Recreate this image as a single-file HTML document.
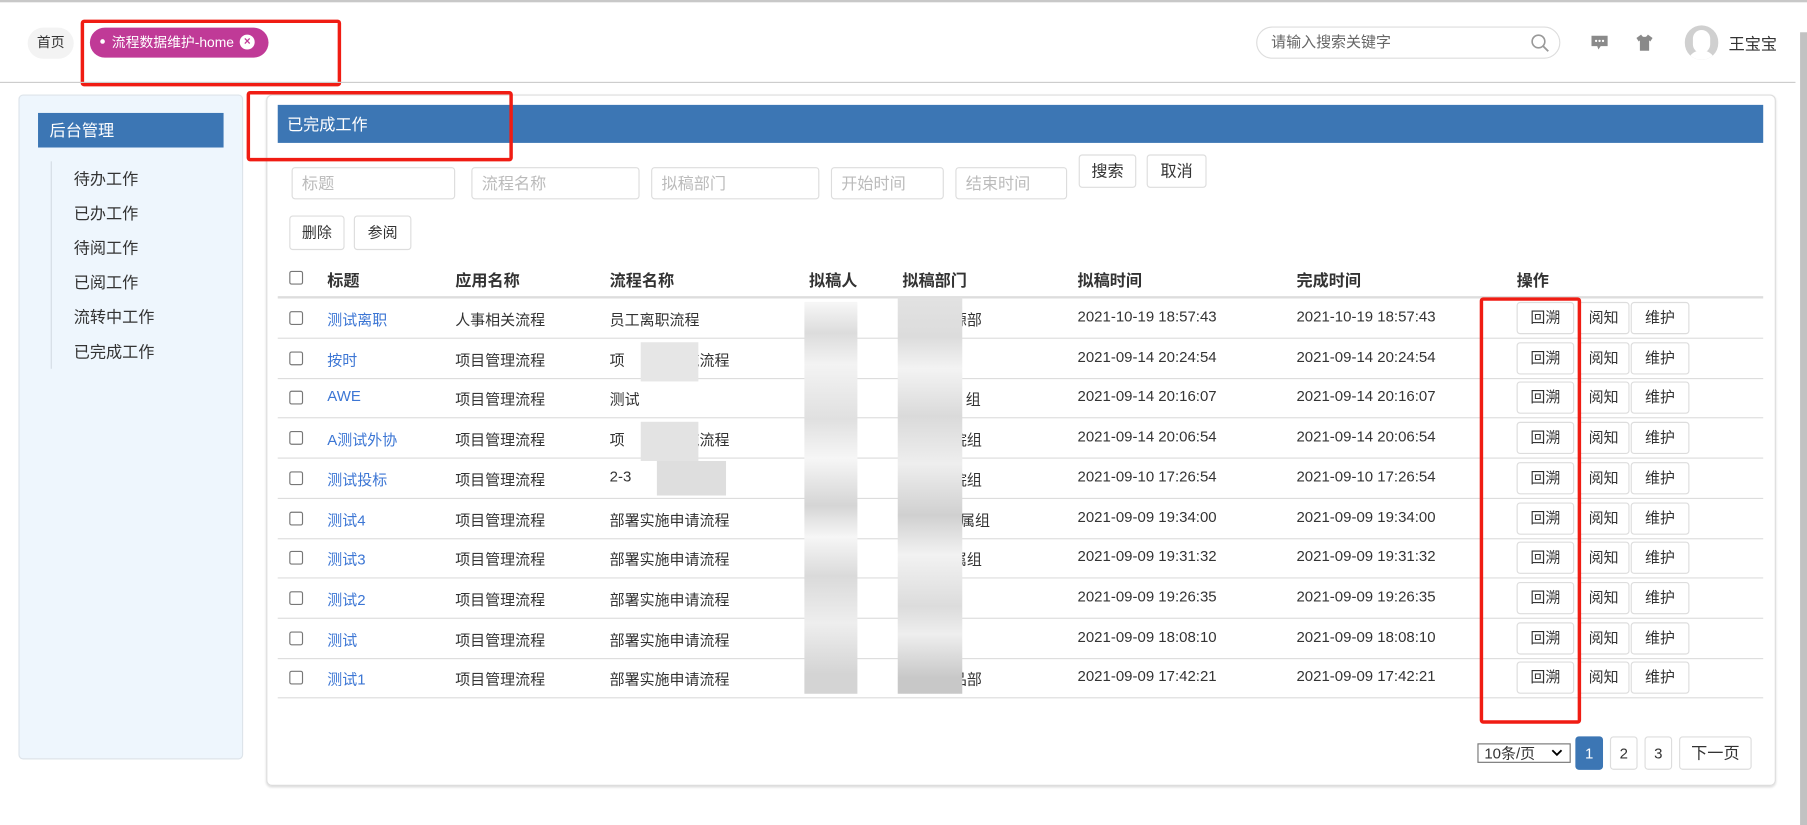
<!DOCTYPE html>
<html><head><meta charset="utf-8">
<style>
html,body{margin:0;padding:0;background:#fff;overflow:hidden;width:1807px;height:825px}
#w{position:absolute;left:0;top:0;width:1568px;height:716px;transform:scale(1.15242);transform-origin:0 0;font-family:"Liberation Sans","Noto Sans CJK SC",sans-serif;font-size:14px;color:#333}
.a{position:absolute}
.inp{position:absolute;top:145px;height:28px;border:1px solid #ddd;border-radius:3px;box-sizing:border-box;color:#bbb;font-size:14px;line-height:26px;padding-left:8px}
.btn{position:absolute;border:1px solid #ddd;border-radius:3px;box-sizing:border-box;background:#fff;text-align:center;font-size:13px;color:#333}
.cb{position:absolute;left:251px;width:10px;height:10px;border:1px solid #777;border-radius:2px}
.row{position:absolute;left:241px;width:1289px;height:34px;border-bottom:1px solid #ddd}
.row span{position:absolute;top:8px;font-size:13px}
.red{position:absolute;border:3px solid #f01c13;border-radius:3px;box-sizing:border-box}
.blk{position:absolute;background:#d8d8da}
</style></head><body><div id="w">
<div class="a" style="left:0;top:0;width:1568px;height:2px;background:#c8c8c8"></div>
<div class="a" style="left:24px;top:24px;width:40px;height:27px;border-radius:14px;background:#f3f3f3;font-size:12px;line-height:27px;text-align:center">首页</div>
<div class="a" style="left:78px;top:24px;width:155px;height:26px;border-radius:13px;background:#c03a97;color:#fff;font-size:12px;line-height:26px"><span style="position:absolute;left:9px;top:10px;width:4px;height:4px;border-radius:2px;background:#fff"></span><span style="position:absolute;left:19px">流程数据维护-home</span><span style="position:absolute;left:130px;top:6px;width:13px;height:13px;border-radius:7px;background:#fff;color:#c03a97;font-size:10px;line-height:13px;text-align:center;font-weight:bold">×</span></div>
<div class="red" style="left:70px;top:17px;width:226px;height:58px"></div>
<div class="a" style="left:0;top:71px;width:1558px;height:1px;background:#ccc"></div>
<div class="a" style="left:1090px;top:23px;width:264px;height:28px;border:1px solid #ddd;border-radius:15px;box-sizing:border-box;color:#666;font-size:13px;line-height:26px;padding-left:12px">请输入搜索关键字
<svg style="position:absolute;right:8px;top:5px" width="17" height="17" viewBox="0 0 17 17"><circle cx="7" cy="7" r="5.5" fill="none" stroke="#999" stroke-width="1.4"/><path d="M11 11l4.5 4.5" stroke="#999" stroke-width="1.6"/></svg></div>
<svg class="a" style="left:1380px;top:30px" width="16" height="15" viewBox="0 0 16 15"><path d="M1 1h14v9H9l-2 3-1-3H1z" fill="#8a8a8a"/><circle cx="5" cy="5.5" r="1" fill="#fff"/><circle cx="8" cy="5.5" r="1" fill="#fff"/><circle cx="11" cy="5.5" r="1" fill="#fff"/></svg>
<svg class="a" style="left:1419px;top:29px" width="16" height="16" viewBox="0 0 16 16"><path d="M5 1L1 4l2 3 1-1v9h8V6l1 1 2-3-4-3c-1 1-1 2-3 2S6 2 5 1z" fill="#8a8a8a"/></svg>
<div class="a" style="left:1462px;top:22px;width:29px;height:30px;border-radius:15px;background:#d0d0d0;overflow:hidden"><div class="a" style="left:7px;top:4px;width:15px;height:20px;border-radius:8px;background:#fff"></div><div class="a" style="left:3px;top:22px;width:23px;height:12px;border-radius:10px 10px 0 0;background:#fff"></div></div>
<div class="a" style="left:1500px;top:28px;font-size:14px;color:#333">王宝宝</div>
<div class="a" style="left:1562px;top:28px;width:6px;height:688px;background:#c2c2c2"></div>

<div class="a" style="left:16px;top:82px;width:195px;height:577px;background:#eef6fd;border:1px solid #dde4ea;border-radius:4px;box-sizing:border-box"></div>
<div class="a" style="left:33px;top:98px;width:161px;height:30px;background:#3c76b4;color:#fff;font-size:14px;line-height:30px;padding-left:10px;box-sizing:border-box">后台管理</div>
<div class="a" style="left:44px;top:140px;width:1px;height:180px;background:#d5dde5"></div>
<div class="a" style="left:64px;top:140px;line-height:30px;font-size:14px">待办工作<br>已办工作<br>待阅工作<br>已阅工作<br>流转中工作<br>已完成工作</div>

<div class="a" style="left:231px;top:82px;width:1310px;height:600px;border:1px solid #ddd;border-radius:5px;box-sizing:border-box;box-shadow:0 1px 2px #ddd"></div>
<div class="a" style="left:241px;top:91px;width:1289px;height:33px;background:#3c76b4;color:#fff;font-size:14px;line-height:35px;padding-left:8px;box-sizing:border-box">已完成工作</div>
<div class="red" style="left:214px;top:79px;width:231px;height:61px"></div>

<div class="inp" style="left:253px;width:142px">标题</div>
<div class="inp" style="left:409px;width:146px">流程名称</div>
<div class="inp" style="left:565px;width:146px">拟稿部门</div>
<div class="inp" style="left:721px;width:98px">开始时间</div>
<div class="inp" style="left:829px;width:97px">结束时间</div>
<div class="btn" style="left:936px;top:134px;width:50px;height:29px;line-height:27px;font-size:14px">搜索</div>
<div class="btn" style="left:995px;top:134px;width:52px;height:29px;line-height:27px;font-size:14px">取消</div>
<div class="btn" style="left:251px;top:187px;width:48px;height:30px;line-height:28px">删除</div>
<div class="btn" style="left:307px;top:187px;width:50px;height:30px;line-height:28px">参阅</div>

<div class="a" style="left:241px;top:226px;width:1289px;height:31px;border-bottom:2px solid #ddd;font-weight:bold;font-size:14px">
<div class="cb" style="left:10px;top:9px"></div>
<span class="a" style="left:43px;top:7px">标题</span><span class="a" style="left:154px;top:7px">应用名称</span><span class="a" style="left:288px;top:7px">流程名称</span><span class="a" style="left:461px;top:7px">拟稿人</span><span class="a" style="left:542px;top:7px">拟稿部门</span><span class="a" style="left:694px;top:7px">拟稿时间</span><span class="a" style="left:884px;top:7px">完成时间</span><span class="a" style="left:1075px;top:7px">操作</span>
</div>

<div id="rows"></div>
<script>
var d=[["测试离职","人事相关流程","员工离职流程","源部","2021-10-19 18:57:43","2021-10-19 18:57:43"],
["按时","项目管理流程","项　　　　施流程","","2021-09-14 20:24:54","2021-09-14 20:24:54"],
["AWE","项目管理流程","测试","组","2021-09-14 20:16:07","2021-09-14 20:16:07"],
["A测试外协","项目管理流程","项　　　　施流程","院组","2021-09-14 20:06:54","2021-09-14 20:06:54"],
["测试投标","项目管理流程","2-3","院组","2021-09-10 17:26:54","2021-09-10 17:26:54"],
["测试4","项目管理流程","部署实施申请流程","直属组","2021-09-09 19:34:00","2021-09-09 19:34:00"],
["测试3","项目管理流程","部署实施申请流程","属组","2021-09-09 19:31:32","2021-09-09 19:31:32"],
["测试2","项目管理流程","部署实施申请流程","","2021-09-09 19:26:35","2021-09-09 19:26:35"],
["测试","项目管理流程","部署实施申请流程","","2021-09-09 18:08:10","2021-09-09 18:08:10"],
["测试1","项目管理流程","部署实施申请流程","品部","2021-09-09 17:42:21","2021-09-09 17:42:21"]];
var h="";
for(var i=0;i<10;i++){var r=d[i],t=259+i*34.7;
h+='<div class="row" style="top:'+t+'px"><div class="cb" style="left:10px;top:11px"></div>'+
'<span style="left:43px;color:#3c76d4">'+r[0]+'</span><span style="left:154px">'+r[1]+'</span><span style="left:288px">'+r[2]+'</span>'+
'<span style="left:'+(r[3].length>=3?579:(r[3].length==2?585:597))+'px">'+r[3]+'</span><span style="left:694px">'+r[4]+'</span><span style="left:884px">'+r[5]+'</span>'+
'<div class="btn" style="left:1075px;top:3px;width:50px;height:28px;line-height:26px">回溯</div>'+
'<div class="btn" style="left:1128px;top:3px;width:45px;height:28px;line-height:26px">阅知</div>'+
'<div class="btn" style="left:1174px;top:3px;width:51px;height:28px;line-height:26px">维护</div></div>';}
h+='<div class="blk" style="left:698px;top:262px;width:46px;height:340px;background:linear-gradient(#f7f7f7,#dcdcdc 8%,#f3f3f3 16%,#e0e0e0 30%,#f6f6f6 40%,#d5d5d5 52%,#f6f6f6 60%,#dadada 70%,#eeeeee 82%,#d4d4d4 95%)"></div>';
h+='<div class="blk" style="left:779px;top:258px;width:56px;height:344px;background:linear-gradient(#e2e2e2,#dcdcdc 10%,#f3f3f3 18%,#dadada 30%,#eeeeee 42%,#d0d0d0 55%,#f2f2f2 65%,#dcdcdc 78%,#eeeeee 85%,#c8c8c8 96%)"></div>';
h+='<div class="blk" style="left:556px;top:297px;width:50px;height:34px;background:#e6e6e6"></div>';
h+='<div class="blk" style="left:556px;top:366px;width:50px;height:34px;background:#e3e3e3"></div>';
h+='<div class="blk" style="left:570px;top:400px;width:60px;height:30px;background:#dedede"></div>';
document.getElementById("rows").innerHTML=h;
</script>
<div class="red" style="left:1284px;top:258px;width:88px;height:370px"></div>

<div class="a" style="left:1282px;top:645px;width:81px;height:17px;border:1px solid #777;box-sizing:border-box;font-size:13px;line-height:15px;padding-left:5px">10条/页<svg style="position:absolute;right:6px;top:4px" width="10" height="7" viewBox="0 0 10 7"><path d="M1 1l4 4 4-4" stroke="#000" stroke-width="1.6" fill="none"/></svg></div>
<div class="a" style="left:1367px;top:639px;width:24px;height:29px;background:#3c76b4;border-radius:3px;color:#fff;text-align:center;line-height:29px;font-size:13px">1</div>
<div class="btn" style="left:1397px;top:639px;width:24px;height:29px;line-height:27px">2</div>
<div class="btn" style="left:1427px;top:639px;width:24px;height:29px;line-height:27px">3</div>
<div class="btn" style="left:1457px;top:639px;width:63px;height:29px;line-height:27px;font-size:14px">下一页</div>
</div></body></html>
